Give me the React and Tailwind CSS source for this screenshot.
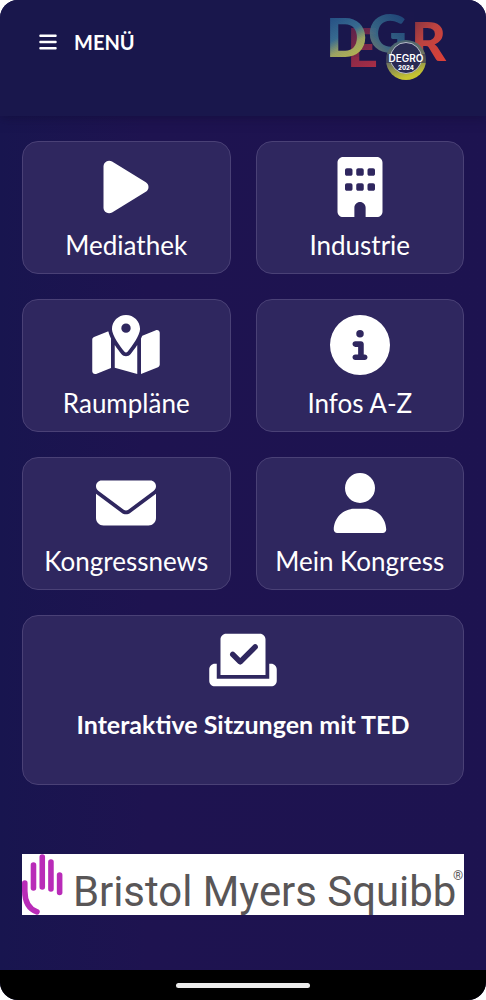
import {
  FaBars,
  FaBuilding,
  FaCheckToSlot,
  FaCircleInfo,
  FaEnvelope,
  FaMapLocationDot,
  FaPlay,
  FaUser,
} from "react-icons/fa6";

const tiles = [
  { label: "Mediathek", href: "#mediathek", icon: FaPlay },
  { label: "Industrie", href: "#industrie", icon: FaBuilding },
  { label: "Raumpläne", href: "#raumplaene", icon: FaMapLocationDot },
  { label: "Infos A-Z", href: "#infos", icon: FaCircleInfo },
  { label: "Kongressnews", href: "#news", icon: FaEnvelope },
  { label: "Mein Kongress", href: "#mein-kongress", icon: FaUser },
];

function DegroLogo() {
  return (
    <svg
      viewBox="0 0 120 70"
      className="h-[70px] w-[120px] overflow-visible"
      role="img"
      aria-label="DEGRO 2024"
    >
      <defs>
        <linearGradient id="d" x1="0" y1="0" x2="0.35" y2="1">
          <stop offset="0.1" stopColor="#1f4a85" />
          <stop offset="0.55" stopColor="#3a7396" />
          <stop offset="0.75" stopColor="#a9b164" />
          <stop offset="1" stopColor="#c9c64c" />
        </linearGradient>
        <linearGradient id="e" x1="0" y1="0" x2="0.3" y2="1">
          <stop offset="0" stopColor="#4d1f4b" />
          <stop offset="1" stopColor="#a82e46" />
        </linearGradient>
        <linearGradient id="g" x1="0" y1="1" x2="0.6" y2="0">
          <stop offset="0" stopColor="#b99a5c" />
          <stop offset="0.45" stopColor="#3c7690" />
          <stop offset="1" stopColor="#1d4a80" />
        </linearGradient>
        <linearGradient id="r" x1="0" y1="0" x2="0.7" y2="1">
          <stop offset="0.1" stopColor="#7a3040" />
          <stop offset="0.5" stopColor="#bd4340" />
          <stop offset="1" stopColor="#dc4038" />
        </linearGradient>
        <linearGradient id="o" x1="0" y1="0" x2="0.3" y2="1">
          <stop offset="0" stopColor="#3f6078" />
          <stop offset="0.55" stopColor="#6e7260" />
          <stop offset="1" stopColor="#c5c331" />
        </linearGradient>
        <pattern
          id="dots"
          width="2"
          height="2"
          patternUnits="userSpaceOnUse"
          patternTransform="rotate(35)"
        >
          <circle cx="1" cy="1" r="0.5" fill="#19174c" fillOpacity="0.5" />
        </pattern>
      </defs>
      <g
        fontFamily="Lato, 'Open Sans', sans-serif"
        fontWeight="900"
        fontSize="54"
      >
        <text x="19" y="55" fill="url(#e)">
          E
        </text>
        <text x="-2" y="45" fill="url(#d)">
          D
        </text>
        <text x="40" y="41" fill="url(#g)" fillOpacity="0.9">
          G
        </text>
        <text x="83" y="49" fill="url(#r)">
          R
        </text>
      </g>
      <rect width="86" height="45" fill="url(#dots)" />
      <circle cx="78" cy="48" r="20" fill="url(#o)" />
      <circle
        cx="78"
        cy="46"
        r="15.5"
        fill="#292a53"
        stroke="#d8dbe4"
        strokeWidth="0.8"
      />
      <rect x="58" y="42" width="40" height="9" fill="#292a53" fillOpacity="0.6" />
      <g fill="#fff" textAnchor="middle" fontFamily="Inter, sans-serif">
        <text x="78" y="50" fontSize="10" fontWeight="600">
          DEGRO
        </text>
        <text x="78" y="58" fontSize="6" fontWeight="800">
          2024
        </text>
      </g>
    </svg>
  );
}

function SponsorLogo() {
  return (
    <svg
      viewBox="0 0 443 61"
      className="block w-full overflow-visible bg-white"
      role="img"
      aria-label="Bristol Myers Squibb"
    >
      <g
        fill="none"
        stroke="#b92bb8"
        strokeWidth="5.6"
        strokeLinecap="round"
      >
        <path d="M11.5 11V34" />
        <path d="M20.3 3V33" />
        <path d="M29 8V35" />
        <path d="M37.7 21V38.5" />
        <path d="M2.8 29V37C2.8 48 7 55 15 58" />
      </g>
      <text
        x="51"
        y="52"
        fill="#595657"
        fontSize="42"
        fontFamily="Roboto, sans-serif"
      >
        Bristol Myers Squibb
      </text>
      <text
        x="432"
        y="26"
        fill="#595657"
        fontSize="13"
        fontFamily="Roboto, sans-serif"
      >
        ®
      </text>
    </svg>
  );
}

function Tile({ label, href, icon: Icon }) {
  return (
    <a
      href={href}
      className="flex flex-col items-center rounded-2xl border border-[#4a4176] bg-[#2f275f] pt-[15px] pb-3 text-white"
    >
      <Icon className="h-[60px] w-[68px]" />
      <span className="mt-3 text-[26px] leading-8">{label}</span>
    </a>
  );
}

export default function App() {
  return (
    <div className="min-h-screen bg-white font-[Lato,'Open_Sans',sans-serif]">
      <div className="flex min-h-screen flex-col overflow-hidden rounded-[18px] bg-linear-to-r from-[#18154f] via-[#1e1350] via-30% to-[#1d1350]">
        <header className="flex h-[116px] items-start justify-between bg-[#19174c] px-[38px] pt-3 shadow-[0_2px_10px_rgba(15,12,50,0.5)]">
          <button
            type="button"
            className="mt-4 flex items-center gap-4 text-xl font-bold text-white"
          >
            <FaBars className="size-5" />
            MENÜ
          </button>
          <DegroLogo />
        </header>

        <main className="px-[22px] pt-[25px]">
          <nav className="grid grid-cols-2 gap-[25px]">
            {tiles.map((tile) => (
              <Tile key={tile.label} {...tile} />
            ))}
            <a
              href="#ted"
              className="col-span-2 flex flex-col items-center rounded-2xl border border-[#4a4176] bg-[#2f275f] pt-[14px] pb-11 text-white"
            >
              <FaCheckToSlot className="h-[60px] w-[68px]" />
              <span className="mt-[18px] text-[25px] leading-8 font-bold">
                Interaktive Sitzungen mit TED
              </span>
            </a>
          </nav>

          <a href="#sponsor" className="mt-[69px] block">
            <SponsorLogo />
          </a>
        </main>

        <footer className="mt-auto flex h-[30px] items-center justify-center bg-black">
          <div className="h-[5px] w-[134px] rounded-full bg-[#ececec]" />
        </footer>
      </div>
    </div>
  );
}
